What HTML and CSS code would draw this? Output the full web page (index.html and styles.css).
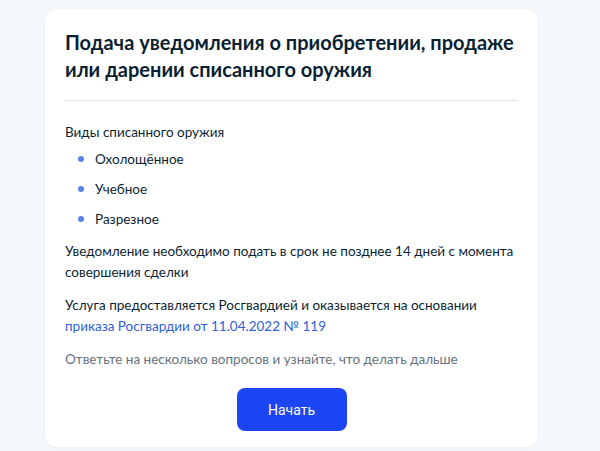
FILE: index.html
```html
<!DOCTYPE html>
<html lang="ru">
<head>
<meta charset="utf-8">
<title>Подача уведомления</title>
<link rel="stylesheet" href="styles.css">
</head>
<body>
<div class="page">
  <section class="card">
    <h1 class="title">Подача уведомления о приобретении, продаже или дарении списанного оружия</h1>
    <hr class="divider">
    <p class="lead">Виды списанного оружия</p>
    <ul class="list">
      <li>Охолощённое</li>
      <li>Учебное</li>
      <li>Разрезное</li>
    </ul>
    <p class="para">Уведомление необходимо подать в срок не позднее 14 дней с момента совершения сделки</p>
    <p class="para">Услуга предоставляется Росгвардией и оказывается на основании <a class="link" href="#">приказа Росгвардии от 11.04.2022 № 119</a></p>
    <p class="para muted">Ответьте на несколько вопросов и узнайте, что делать дальше</p>
    <div class="actions">
      <button class="btn" type="button">Начать</button>
    </div>
  </section>
</div>
</body>
</html>
```
FILE: styles.css
```css
html, body {
  margin: 0;
  padding: 0;
}
body {
  background: #f5f8fb;
  font-family: Lato, "Noto Sans", sans-serif;
  color: #0b1f33;
  height: 451px;
  overflow: hidden;
}
.page {
  padding: 9px 0 0 45px;
}
.card {
  width: 453px;
  background: #ffffff;
  border-radius: 12px;
  padding: 20px 20px 16px 20px;
  box-shadow: 0 1px 4px rgba(180, 195, 215, 0.18);
}
.title {
  margin: 0;
  font-size: 20px;
  line-height: 27px;
  font-weight: 700;
  color: #0b1f33;
}
.divider {
  margin: 17px 0 0 0;
  border: 0;
  height: 1px;
  background: #dbe2ea;
}
.lead {
  margin: 21px 0 0 0;
  font-size: 13.5px;
  line-height: 20px;
}
.list {
  list-style: none;
  margin: 7px 0 0 0;
  padding: 0 0 0 30px;
  display: flex;
  flex-direction: column;
  gap: 10px;
}
.list li {
  position: relative;
  font-size: 13.5px;
  line-height: 20px;
}
.list li::before {
  content: "";
  position: absolute;
  left: -17px;
  top: 7px;
  width: 6px;
  height: 6px;
  border-radius: 50%;
  background: #5a82e4;
}
.para {
  margin: 12px 0 0 0;
  font-size: 13.5px;
  line-height: 21px;
}
.link {
  color: #2f5fd8;
  text-decoration: none;
}
.muted {
  color: #66727f;
}
.actions {
  display: flex;
  justify-content: center;
  margin-top: 18px;
}
.btn {
  width: 110px;
  height: 43px;
  border: 0;
  border-radius: 8px;
  background: #1c46f4;
  color: #ffffff;
  font-family: Roboto, "Liberation Sans", sans-serif;
  font-size: 14px;
  cursor: pointer;
}
```
